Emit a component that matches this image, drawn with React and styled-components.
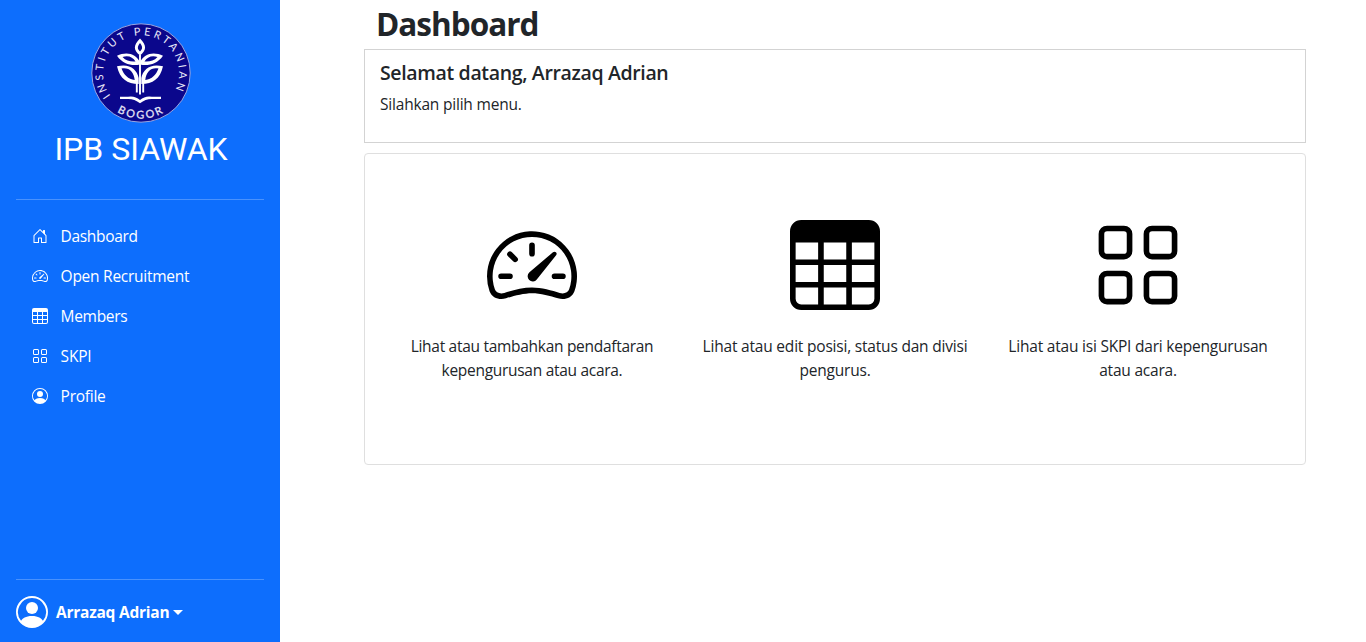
import React from 'react';
import styled, { createGlobalStyle } from 'styled-components';
import { BsSpeedometer2, BsTable, BsGrid, BsPersonCircle } from 'react-icons/bs';

const GlobalStyle = createGlobalStyle`
  *, *::before, *::after { box-sizing: border-box; }
  body {
    margin: 0;
    background: #fff;
    color: #212529;
    font-family: "Segoe UI", "Open Sans", "Noto Sans", sans-serif;
    font-size: 15.5px;
    line-height: 24px;
    overflow: hidden;
  }
  h1, h5, p { margin: 0; }
`;

const Page = styled.div`
  display: flex;
  height: 100vh;
`;

const Sidebar = styled.aside`
  display: flex;
  flex-direction: column;
  width: 280px;
  flex-shrink: 0;
  padding: 16px 16px 14px;
  background: #0d6efd;
  color: #fff;
`;

const Brand = styled.div`
  display: flex;
  flex-direction: column;
  align-items: center;
  height: 183px;
  padding: 7px 0 0 2px;
`;

const BrandName = styled.span`
  margin-top: 2px;
  font-family: Roboto, sans-serif;
  font-weight: 400;
  font-size: 32px;
  line-height: 48px;
  white-space: nowrap;
`;

const Divider = styled.div`
  height: 1px;
  background: rgba(255, 255, 255, 0.25);
`;

const Nav = styled.nav`
  display: flex;
  flex-direction: column;
  flex: 1;
  padding-top: 16px;
`;

const NavLink = styled.a`
  display: flex;
  align-items: center;
  gap: 12.6px;
  height: 40px;
  padding: 0 16px;
  color: #fff;
  letter-spacing: ${(p) => p.$tracking || 0}px;
  white-space: nowrap;

  svg { flex-shrink: 0; }
`;

const Account = styled.div`
  display: flex;
  align-items: center;
  height: 32px;
  margin-top: 16px;
  font-weight: 700;
  font-size: 15.5px;

  span { margin-left: 8px; letter-spacing: -0.24px; white-space: nowrap; }
`;

const Caret = styled.i`
  margin-left: 4px;
  border-top: 5px solid #fff;
  border-left: 5px solid transparent;
  border-right: 5px solid transparent;
`;

const Main = styled.main`
  flex: 1;
  padding: 4px 60px 0 84px;
`;

const Title = styled.h1`
  padding: 1px 0 0 12px;
  font-size: 31.5px;
  font-weight: 700;
  line-height: 38px;
  letter-spacing: -1px;
`;

const Welcome = styled.section`
  height: 94px;
  margin-top: 6px;
  padding: 11px 15px;
  border: 1px solid #d3d3d3;
`;

const WelcomeTitle = styled.h5`
  margin-bottom: 7px;
  font-size: 19.5px;
  font-weight: 600;
  line-height: 24px;
  letter-spacing: -0.35px;
`;

const Text = styled.p`
  letter-spacing: ${(p) => p.$tracking || 0}px;
`;

const MenuCard = styled.section`
  display: grid;
  grid-template-columns: repeat(3, 1fr);
  height: 312px;
  margin-top: 10px;
  padding: 66px 15.5px 0;
  border: 1px solid #dfdfdf;
  border-radius: 4px;
`;

const MenuItem = styled.div`
  display: flex;
  flex-direction: column;
  align-items: center;
  padding: 0 12px;
  text-align: center;

  svg { margin-bottom: 24px; color: #000; }
`;

const HomeIcon = () => (
  <svg width="16" height="16" viewBox="0 0 16 16" fill="currentColor">
    <path d="M8.354 1.146a.5.5 0 0 0-.708 0l-6 6A.5.5 0 0 0 1.5 7.5v7a.5.5 0 0 0 .5.5h4.5a.5.5 0 0 0 .5-.5v-4h2v4a.5.5 0 0 0 .5.5H14a.5.5 0 0 0 .5-.5v-7a.5.5 0 0 0-.146-.354L13 5.793V2.5a.5.5 0 0 0-.5-.5h-1a.5.5 0 0 0-.5.5v1.293L8.354 1.146zM2.5 14V7.707l5.5-5.5 5.5 5.5V14H10v-4a.5.5 0 0 0-.5-.5h-3a.5.5 0 0 0-.5.5v4H2.5z" />
  </svg>
);

const LeafPair = () => (
  <>
    <path d="M-24-17.300C-15-21.500-5-20-1-10.500V-8.500C-9-7-18-8.500-24-17.300ZM-18.500-16C-15-12-10-11-5.500-11.500C-8-16-13-18-18.500-16Z" />
    <path d="M-24-6.700C-12-10-4-4-2.300 5V11C-14 11-21 6-24-6.700ZM-19.500-4.500C-17 2-13 6-6.300 7C-7-1-12-6-19.500-4.500Z" />
  </>
);

const Logo = () => (
  <svg width="100" height="100" viewBox="-50 -50 100 100">
    <defs>
      <path id="arc-top" d="M-30.500 22.800A38 38 0 1 1 33 19" />
      <path id="arc-bottom" d="M-23.800 38.800A45.600 45.600 0 0 0 22.800 39.500" />
    </defs>
    <circle r="49.2" fill="#0b078c" stroke="#a9b4e6" strokeWidth="0.9" />
    <g fill="#e8e8f8" fontFamily="Lato, sans-serif" fontSize="10.8">
      <text textLength="160" lengthAdjust="spacing">
        <textPath href="#arc-top" textLength="160" lengthAdjust="spacing">INSTITUT PERTANIAN</textPath>
      </text>
      <text stroke="#e8e8f8" strokeWidth="0.25" textLength="48" lengthAdjust="spacing">
        <textPath href="#arc-bottom" textLength="48" lengthAdjust="spacing">BOGOR</textPath>
      </text>
    </g>
    <g fill="#fff" fillRule="evenodd">
      <path d="M-1-34.500C5.800-27.500 5.800-23-1-17.500C-7.800-23-7.800-27.500-1-34.500ZM-1-30C-3.800-26.500-3.800-24-1-21.500C1.800-24 1.800-26.500-1-30Z" />
      <LeafPair />
      <g transform="translate(-2 0) scale(-1 1)">
        <LeafPair />
      </g>
      <path d="M-21 23.700H-13Q-6 22.500-1 27Q4 22.500 11 23.700H20V26H12Q5 25.500-1 30.300Q-7 25.500-14 26H-21Z" />
    </g>
    <path d="M-1-18V21.500M-4.200 7V19.500M2.200 7V19.500" stroke="#fff" strokeWidth="1.900" />
  </svg>
);

const links = [
  { label: 'Dashboard', Icon: HomeIcon, tracking: -0.33 },
  { label: 'Open Recruitment', Icon: BsSpeedometer2, tracking: -0.26 },
  { label: 'Members', Icon: BsTable, tracking: -0.32 },
  { label: 'SKPI', Icon: BsGrid, tracking: -0.2 },
  { label: 'Profile', Icon: BsPersonCircle, tracking: -0.25 },
];

const menu = [
  { text: 'Lihat atau tambahkan pendaftaran kepengurusan atau acara.', Icon: BsSpeedometer2, tracking: -0.29 },
  { text: 'Lihat atau edit posisi, status dan divisi pengurus.', Icon: BsTable, tracking: -0.2 },
  { text: 'Lihat atau isi SKPI dari kepengurusan atau acara.', Icon: BsGrid, tracking: -0.21 },
];

export default function App() {
  return (
    <>
      <GlobalStyle />
      <Page>
        <Sidebar>
          <Brand>
            <Logo />
            <BrandName>IPB SIAWAK</BrandName>
          </Brand>
          <Divider />
          <Nav>
            {links.map(({ label, Icon, tracking }) => (
              <NavLink key={label} $tracking={tracking}>
                <Icon size={16} />
                {label}
              </NavLink>
            ))}
          </Nav>
          <Divider />
          <Account>
            <BsPersonCircle size={32} />
            <span>Arrazaq Adrian</span>
            <Caret />
          </Account>
        </Sidebar>
        <Main>
          <Title>Dashboard</Title>
          <Welcome>
            <WelcomeTitle>Selamat datang, Arrazaq Adrian</WelcomeTitle>
            <Text $tracking={-0.2}>Silahkan pilih menu.</Text>
          </Welcome>
          <MenuCard>
            {menu.map(({ text, Icon, tracking }) => (
              <MenuItem key={text}>
                <Icon size={90} />
                <Text $tracking={tracking}>{text}</Text>
              </MenuItem>
            ))}
          </MenuCard>
        </Main>
      </Page>
    </>
  );
}
